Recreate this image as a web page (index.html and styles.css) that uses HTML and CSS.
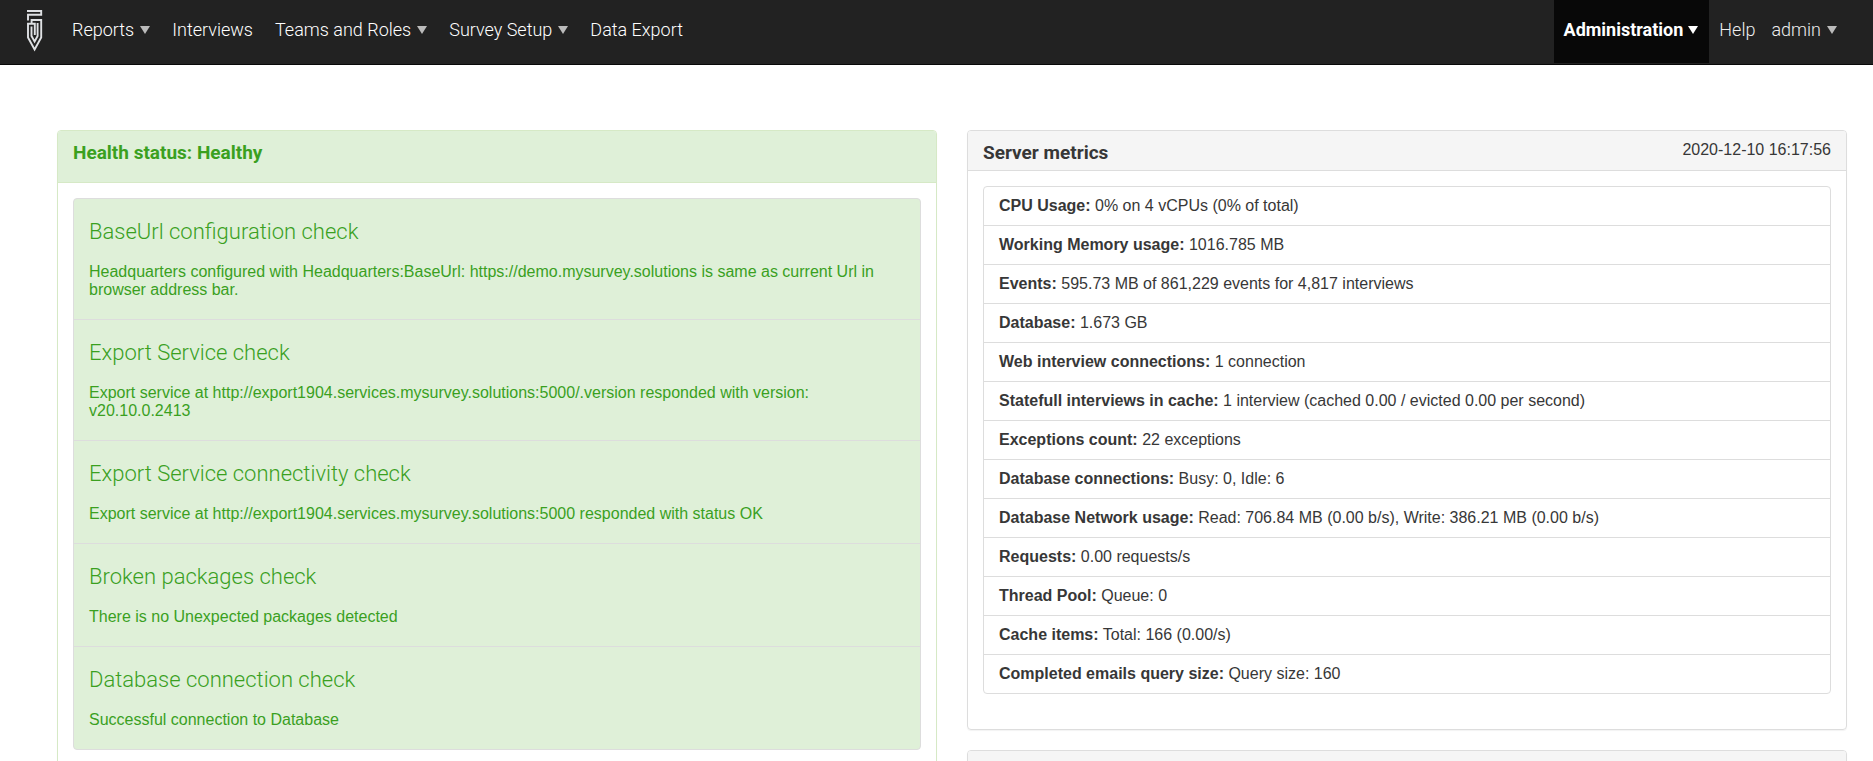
FILE: index.html
```html
<!DOCTYPE html>
<html lang="en">
<head>
<meta charset="utf-8">
<title>Server health</title>
<link rel="stylesheet" href="styles.css">
</head>
<body>
<header class="navbar">
  <a class="brand" href="#" aria-label="Home">
    <svg class="logo" viewBox="0 0 16 42" width="16" height="42" fill="none" stroke="#dfe1e4" stroke-width="1.9">
      <path d="M0 1H14.2V4.8H1V10.4"/>
      <path d="M4.6 14V10H14.2V27.5L7.6 39.5L1 27.5V13.8H7.8V25"/>
      <path d="M10.6 13V26L7.6 31.5L4.5 26V16.5"/>
    </svg>
  </a>
  <nav class="menu">
    <button class="item" type="button">Reports<span class="caret"></span></button>
    <a class="item" href="#">Interviews</a>
    <button class="item" type="button">Teams and Roles<span class="caret"></span></button>
    <button class="item" type="button">Survey Setup<span class="caret"></span></button>
    <a class="item" href="#">Data Export</a>
  </nav>
  <nav class="menu menu-right">
    <button class="item active" type="button">Administration<span class="caret"></span></button>
    <a class="item light" href="#">Help</a>
    <button class="item light" type="button">admin<span class="caret"></span></button>
  </nav>
</header>
<main class="content">
  <section class="panel panel-success">
    <div class="panel-head"><h2>Health status: Healthy</h2></div>
    <ul class="list checks">
      <li><h3>BaseUrl configuration check</h3><p>Headquarters configured with Headquarters:BaseUrl: https://demo.mysurvey.solutions is same as current Url in browser address bar.</p></li>
      <li><h3>Export Service check</h3><p>Export service at http://export1904.services.mysurvey.solutions:5000/.version responded with version: v20.10.0.2413</p></li>
      <li><h3>Export Service connectivity check</h3><p>Export service at http://export1904.services.mysurvey.solutions:5000 responded with status OK</p></li>
      <li><h3>Broken packages check</h3><p>There is no Unexpected packages detected</p></li>
      <li><h3>Database connection check</h3><p>Successful connection to Database</p></li>
    </ul>
  </section>
  <div class="column">
    <section class="panel">
      <div class="panel-head"><h2>Server metrics</h2><time datetime="2020-12-10T16:17:56">2020-12-10 16:17:56</time></div>
      <ul class="list metrics">
        <li><strong>CPU Usage:</strong> 0% on 4 vCPUs (0% of total)</li>
        <li><strong>Working Memory usage:</strong> 1016.785 MB</li>
        <li><strong>Events:</strong> 595.73 MB of 861,229 events for 4,817 interviews</li>
        <li><strong>Database:</strong> 1.673 GB</li>
        <li><strong>Web interview connections:</strong> 1 connection</li>
        <li><strong>Statefull interviews in cache:</strong> 1 interview (cached 0.00 / evicted 0.00 per second)</li>
        <li><strong>Exceptions count:</strong> 22 exceptions</li>
        <li><strong>Database connections:</strong> Busy: 0, Idle: 6</li>
        <li><strong>Database Network usage:</strong> Read: 706.84 MB (0.00 b/s), Write: 386.21 MB (0.00 b/s)</li>
        <li><strong>Requests:</strong> 0.00 requests/s</li>
        <li><strong>Thread Pool:</strong> Queue: 0</li>
        <li><strong>Cache items:</strong> Total: 166 (0.00/s)</li>
        <li><strong>Completed emails query size:</strong> Query size: 160</li>
      </ul>
    </section>
    <section class="panel">
      <div class="panel-head"></div>
    </section>
  </div>
</main>
</body>
</html>
```
FILE: styles.css
```css
* { box-sizing: border-box; }
html, body { height: 100%; }
body {
  margin: 0;
  display: flex;
  flex-direction: column;
  overflow: hidden;
  background: #fff;
  color: #373737;
  font: 16px/18px "Liberation Sans", Arial, sans-serif;
}
.navbar {
  flex: none;
  display: flex;
  height: 65px;
  padding: 0 26px 0 27px;
  background: #222;
  border-bottom: 1px solid #080808;
}
.brand { display: block; padding-top: 10px; margin-right: 18px; }
.logo { display: block; }
.menu { display: flex; align-items: flex-start; }
.menu-right { margin-left: auto; }
.item {
  display: flex;
  align-items: center;
  gap: 6px;
  height: 63px;
  padding: 0 11px 3px;
  border: 0;
  background: none;
  color: #fff;
  font: 300 18px/20px Roboto, sans-serif;
  text-decoration: none;
  white-space: nowrap;
}
.item.light { color: #eee; padding: 0 10px 3px; }
.item.light + .item.light { padding-left: 6px; }
.item.active { gap: 5px; padding: 0 11px 3px 10px; background: #080808; font-weight: 700; }
.caret {
  border: 5px solid transparent;
  border-top: 8px solid #bbb;
  border-bottom: 0;
}
.active .caret { border-top-color: #fff; }
.content {
  flex: 1;
  min-height: 0;
  display: grid;
  grid-template-columns: 1fr 1fr;
  align-items: start;
  gap: 30px;
  padding: 65px 26px 0 57px;
}
.column { display: grid; gap: 20px; }
.panel {
  border: 1px solid #ddd;
  border-radius: 4px;
  box-shadow: 0 1px 1px rgba(0, 0, 0, .05);
}
.panel-head {
  display: flex;
  justify-content: space-between;
  min-height: 40px;
  padding: 10px 15px 6px;
  background: #f5f5f5;
  border-bottom: 1px solid #ddd;
  border-radius: 3px 3px 0 0;
}
h2 {
  margin: 0;
  font: 700 19px/23px Roboto, sans-serif;
}
.panel-success { border-color: #d6e9c6; }
.panel-success .panel-head {
  padding-bottom: 18px;
  background: #dff0d8;
  border-color: #d6e9c6;
  color: #3aa01f;
}
.list {
  list-style: none;
  margin: 15px 15px 35px;
  padding: 0;
  border: 1px solid #ddd;
  border-radius: 4px;
}
.list li { padding: 10px 15px; }
.list li + li { border-top: 1px solid #ddd; }
.checks { background: #dff0d8; color: #3aa01f; }
h3 {
  margin: 10px 0 18px;
  font: 300 22px/26px Roboto, sans-serif;
}
p { margin: 0 0 10px; }
```
